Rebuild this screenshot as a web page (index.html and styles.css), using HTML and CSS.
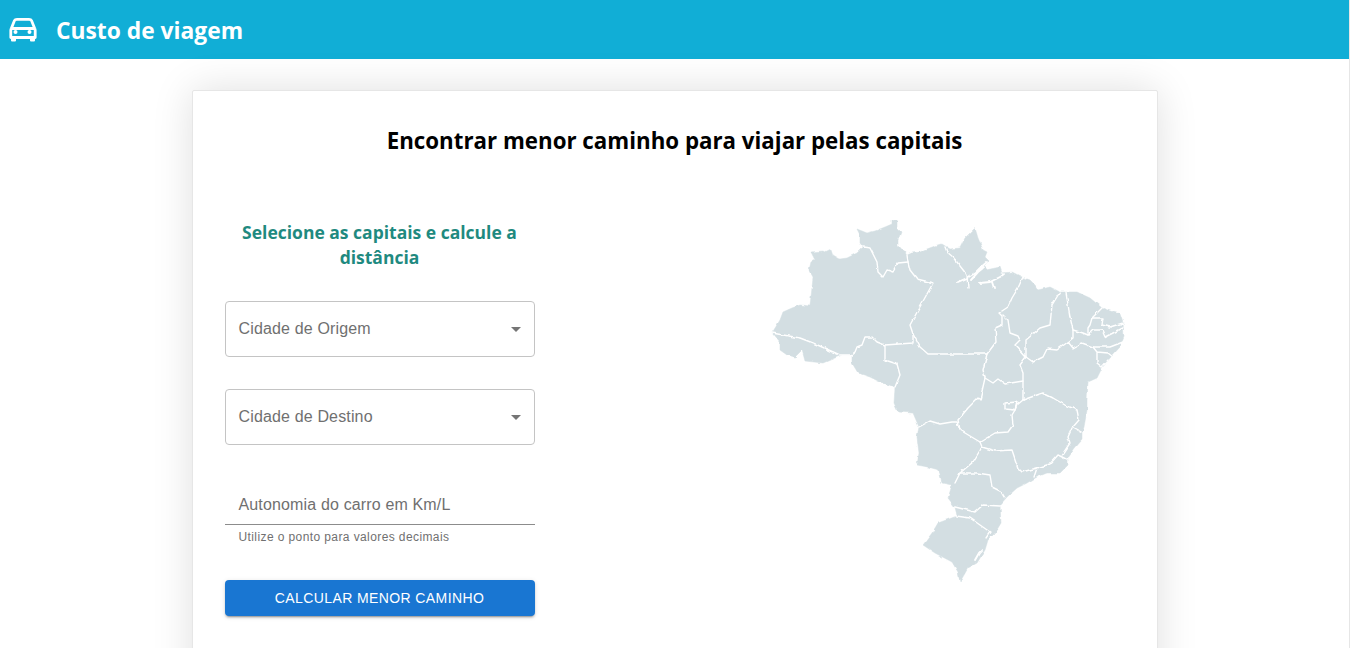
FILE: index.html
```html
<!DOCTYPE html>
<html lang="pt-BR">
<head>
<meta charset="utf-8">
<title>Custo de viagem</title>
<link rel="stylesheet" href="styles.css">
</head>
<body>
<header class="topbar">
  <svg class="car" viewBox="0 0 28 26" width="28" height="26" aria-hidden="true">
    <path class="car-line" d="M2.300 11.500 L5.500 3.500 Q6 2.300 8 2.300 H20 Q22 2.300 22.500 3.500 L25.700 11.500 M2.300 11.500 Q1.800 12 1.800 13.500 V20.500 H26.200 V13.500 Q26.200 12 25.700 11.500 Z"/>
    <path class="car-fill" d="M2 20 H7 V23.500 Q7 24.500 6 24.500 H3 Q2 24.500 2 23.500 Z M21 20 H26 V23.500 Q26 24.500 25 24.500 H22 Q21 24.500 21 23.500 Z"/>
    <circle class="car-fill" cx="6.500" cy="15" r="2"/>
    <circle class="car-fill" cx="20.500" cy="15" r="2"/>
  </svg>
  <h1 class="brand">Custo de viagem</h1>
</header>
<main class="page">
  <section class="card">
    <h2 class="card-title">Encontrar menor caminho para viajar pelas capitais</h2>
    <div class="columns">
      <form class="form">
        <h3 class="form-title">Selecione as capitais e calcule a distância</h3>
        <div class="select"><span>Cidade de Origem</span><i class="caret"></i></div>
        <div class="select"><span>Cidade de Destino</span><i class="caret"></i></div>
        <div class="input"><span>Autonomia do carro em Km/L</span></div>
        <p class="helper">Utilize o ponto para valores decimais</p>
        <button type="button" class="submit">Calcular menor caminho</button>
      </form>
      <svg class="map" viewBox="770 220 356 366" width="356" height="366" role="img" aria-label="Mapa do Brasil">
        <defs>
          <filter id="wobble" x="-5%" y="-5%" width="110%" height="110%">
            <feTurbulence type="fractalNoise" baseFrequency="0.14" numOctaves="2" seed="4" result="n"/>
            <feDisplacementMap in="SourceGraphic" in2="n" scale="3" xChannelSelector="R" yChannelSelector="G"/>
          </filter>
        </defs>
        <g class="map-shapes">
        <path class="land" d="M772 333 L780 320 L783 312 L792 308 L800 305 L810 306 L813 277 L809 270 L811 262 L815 260 L811 252 L823 251 L825 252 L831 249 L833 255 L840 259 L847 258 L857 253 L863 247 L860 243 L860 235 L857 229 L867 233 L875 231 L885 227 L892 224 L892 220 L897 221 L897 228 L901 232 L898 240 L898 245 L907 255 L912 253 L920 252 L927 249 L935 246 L942 244 L950 249 L960 248 L965 238 L975 228 L978 238 L983 250 L987 252 L985 257 L989 261 L984 266 L986 270 L1000 267 L1002 273 L1012 272 L1022 277 L1030 280 L1035 285 L1038 290 L1050 287 L1060 292 L1077 292 L1090 298 L1102 308 L1113 312 L1120 314 L1123 323 L1124 337 L1120 347 L1110 358 L1102 368 L1097 378 L1088 382 L1087 400 L1087 410 L1084 427 L1082 433 L1082 440 L1075 448 L1068 458 L1068 465 L1060 473 L1047 473 L1037 477 L1027 483 L1017 488 L1007 497 L1000 505 L1001 523 L995 533 L988 540 L985 550 L977 563 L968 568 L960 582 L958 572 L952 562 L935 553 L923 545 L932 533 L938 523 L957 516 L955 507 L948 498 L952 485 L942 483 L939 470 L928 467 L917 465 L919 453 L917 437 L919 427 L913 413 L898 412 L894 403 L895 387 L880 382 L870 377 L858 373 L852 363 L852 355 L842 355 L823 363 L805 361 L802 350 L795 357 L787 355 L780 350 L780 343 Z"/>
        <path class="border" d="M772 333 L800 338 L813 343 L840 355 L851 355 L855 352 L857 347 L862 345 L865 337 L872 337 L877 342 L885 345 L885 360 L897 364 L900 375 L895 387"/>
        <path class="border" d="M885 345 L913 343 L913 334 L910 325 L933 283 L917 279 L910 270 L908 262 L907 255"/>
        <path class="border" d="M913 334 L920 347 L928 354 L987 354"/>
        <path class="border" d="M863 247 L870 248 L877 262 L878 272 L883 277 L887 270 L893 272 L898 263 L908 262"/>
        <path class="border" d="M945 247 L947 252 L953 257 L967 275 L968 288"/>
        <path class="border wide" d="M958 282 L967 278 L975 273 L980 268 L987 262 M971 280 L978 272 L983 268"/>
        <path class="border wide" d="M980 283 L990 282 L1000 277 L1004 274 M992 282 L994 288"/>
        <path class="border" d="M1023 277 L1018 288 L1012 298 L1008 307 L999 313 L1002 316 L1002 325 L995 328 L996 342 L987 354 L983 370 L985 378 L980 400 L978 398 L968 408 L958 420 L960 430 L980 442 L982 447 L973 462 L960 473 L955 483"/>
        <path class="border" d="M1003 315 L1008 320 L1010 333 L1018 336 L1020 340 L1015 345 L1026 357 L1020 365 L1023 373 L1023 400"/>
        <path class="border" d="M1060 292 L1052 305 L1050 325 L1040 328 L1026 340 L1026 357 L1033 362 L1043 357 L1047 349 L1057 350 L1068 342"/>
        <path class="border" d="M985 378 L993 383 L998 379 L1005 384 L1023 381"/>
        <path class="border" d="M1066 292 L1070 317 L1073 330 L1073 338 L1068 342 L1073 348 L1082 343 L1093 347 L1110 347 L1123 342"/>
        <path class="border" d="M1102 308 L1092 318 L1090 325 L1088 328 L1088 335"/>
        <path class="border" d="M1092 318 L1103 318 L1102 325 L1110 327 L1123 323"/>
        <path class="border" d="M1073 330 L1083 333 L1088 335 L1093 330 L1102 330 L1105 337 L1123 328"/>
        <path class="border" d="M1093 347 L1097 352 L1108 353 L1113 357 M1097 352 L1097 363 L1102 367 L1108 360"/>
        <path class="border" d="M1023 400 L1037 395 L1043 393 L1053 398 L1065 405 L1077 410 L1079 420 L1073 427 L1082 432"/>
        <path class="border" d="M1023 400 L1017 405 L1015 410 L1012 415 L1013 425 L1008 432 L995 433 L980 442"/>
        <path class="border" d="M1005 403 L1017 402 L1015 410 L1005 409 Z"/>
        <path class="border" d="M960 430 L957 422 L952 422 L940 424 L930 421 L919 427"/>
        <path class="border" d="M982 447 L995 451 L1012 450 L1018 468 L1022 472 L1037 468 L1050 464 L1058 455 L1068 460"/>
        <path class="border" d="M1072 428 L1068 437 L1070 443 L1062 455"/>
        <path class="border" d="M1037 468 L1034 477"/>
        <path class="border" d="M960 473 L977 473 L990 475 L992 487 L1002 492 L1005 497"/>
        <path class="border" d="M955 507 L975 512 L983 505 L1000 506"/>
        <path class="border" d="M956 516 L970 518 L980 525 L990 532 L986 538"/>
        <path class="border wide" d="M975 560 L979 553 L982 550"/>
        </g>
      </svg>
    </div>
  </section>
</main>
</body>
</html>
```
FILE: styles.css
```css
* { box-sizing: border-box; }
html, body { margin: 0; height: 648px; overflow: hidden; background: #fff; }
body { border-right: 1px solid #e6e6e6; font-family: "Liberation Sans", Arial, sans-serif; }

.topbar {
  display: flex;
  align-items: center;
  gap: 19px;
  height: 59px;
  padding: 0 0 0 9px;
  background: #11aed6;
}
.car { flex: none; margin-top: 1px; }
.car-line { fill: none; stroke: #fff; stroke-width: 2.8; stroke-linejoin: round; }
.car-fill { fill: #fff; }
.brand {
  margin: 3px 0 0;
  color: #fff;
  font: 700 22.8px/1 "Open Sans", sans-serif;
}

.page { display: flex; justify-content: center; padding-top: 31px; }
.card {
  width: 966px;
  height: 640px;
  padding: 0 32px;
  border: 1px solid #e6e6e6;
  border-radius: 2px;
  background: #fff;
  box-shadow: 0 0 40px rgba(0, 0, 0, .13);
}
.card-title {
  margin: 34px 0 0;
  color: #000;
  text-align: center;
  font: 700 22.3px/32px "Open Sans", sans-serif;
}
.columns {
  display: flex;
  justify-content: space-between;
  align-items: flex-start;
  margin-top: 63px;
}
.form { display: flex; flex-direction: column; width: 310px; }
.form-title {
  margin: 0 0 31px;
  color: #1f8a80;
  text-align: center;
  font: 700 17.5px/25px "Open Sans", sans-serif;
}
.select {
  display: flex;
  align-items: center;
  justify-content: space-between;
  height: 56px;
  margin-bottom: 32px;
  padding: 0 13px;
  border: 1px solid #c4c4c4;
  border-radius: 4px;
  color: #707070;
  font-size: 16px;
  letter-spacing: .15px;
}
.caret {
  width: 0;
  height: 0;
  border: 5px solid transparent;
  border-top-color: #757575;
  border-bottom: 0;
}
.input {
  display: flex;
  align-items: center;
  height: 48px;
  padding: 8px 14px 0;
  border-bottom: 1px solid #8c8c8c;
  color: #707070;
  font-size: 16px;
  letter-spacing: .15px;
}
.helper {
  margin: 5px 0 0;
  padding: 0 14px;
  color: #707070;
  font-size: 12px;
  line-height: 14px;
  letter-spacing: .4px;
}
.submit {
  height: 36px;
  margin-top: 36px;
  border: 0;
  border-radius: 4px;
  background: #1976d2;
  color: #fff;
  font: 400 14px/1 "Liberation Sans", Arial, sans-serif;
  letter-spacing: .4px;
  text-transform: uppercase;
  box-shadow: 0 3px 1px -2px rgba(0,0,0,.2), 0 2px 2px 0 rgba(0,0,0,.14), 0 1px 5px 0 rgba(0,0,0,.12);
}
.map { flex: none; margin-right: -1px; }
.map-shapes { filter: url(#wobble); }
.land { fill: #d3dee2; stroke: #d3dee2; stroke-width: .5; stroke-linejoin: round; }
.border { fill: none; stroke: #fff; stroke-width: 1.4; stroke-linejoin: round; stroke-linecap: round; }
.wide { stroke-width: 1.9; }
```
